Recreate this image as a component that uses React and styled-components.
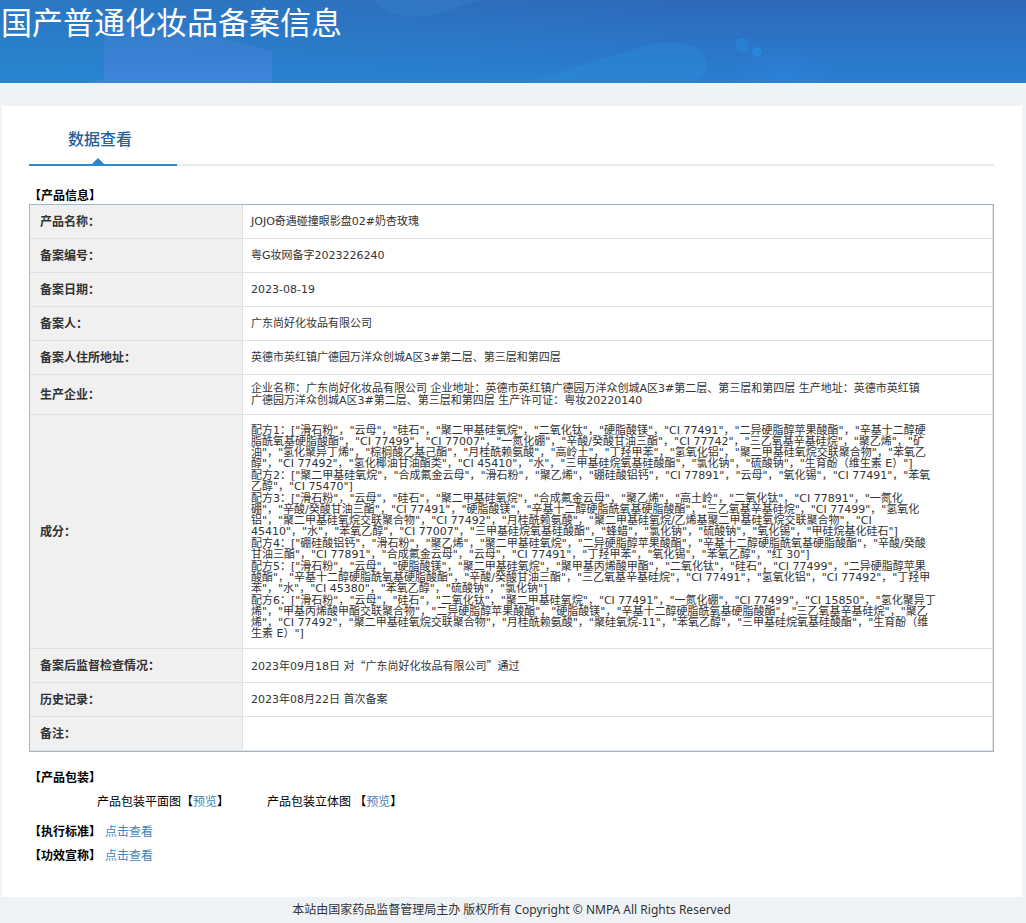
import styled, { createGlobalStyle } from 'styled-components';

const GlobalStyle = createGlobalStyle`
    * {
        box-sizing: border-box;
    }

    body {
        margin: 0;
        background-color: #eff3f6;
        color: #000;
        font-family: "Noto Sans", "Noto Sans CJK SC", sans-serif;
        font-size: 12px;
    }
`;

const Page = styled.div`
    display: flex;
    flex-direction: column;
    min-height: 100vh;
`;

const Banner = styled.header`
    position: relative;
    height: 83px;
    background: linear-gradient(to bottom, #2e68b9, #297fd2);
`;

const BannerArt = styled.svg`
    position: absolute;
    inset: 0;
    width: 100%;
    height: 100%;
`;

const BannerTitle = styled.h1`
    position: relative;
    margin: 0;
    padding-left: 1px;
    color: #fff;
    font-family: "Noto Sans CJK SC", sans-serif;
    font-size: 31px;
    font-weight: 400;
    line-height: 42px;
`;

const Panel = styled.main`
    flex: 1;
    margin: 23px 4px 0 2px;
    padding: 16px 28px 28px 27px;
    background-color: #fff;
`;

const Tabs = styled.nav`
    display: flex;
    margin-bottom: 22px;
    box-shadow: inset 0 -2px 0 #e8e8e8;
`;

const Tab = styled.a`
    position: relative;
    width: 148px;
    padding: 5px 0 13px 39px;
    border-bottom: 2px solid #3089cd;
    color: #22619f;
    font-size: 16px;
    font-weight: 500;
    line-height: 24px;
    text-decoration: none;
`;

const Arrow = styled.svg`
    position: absolute;
    left: 63px;
    bottom: 0;
`;

const SectionTitle = styled.h2`
    margin: 0;
    font-size: 12px;
    font-weight: 700;
    line-height: ${props => (props.$tight ? '16px' : '24px')};
`;

const Table = styled.table`
    width: 100%;
    border: 1px solid #9ab8d2;
    border-collapse: separate;
    border-spacing: 0;
    color: #333;
    table-layout: fixed;
    margin-bottom: 14px;
`;

const Row = styled.tr`
    height: ${props => props.$height || 34}px;

    & > * {
        border-bottom: 1px solid #e0e0e0;
    }
`;

const Label = styled.th`
    width: 213px;
    padding: 0 10px;
    border-right: 1px solid #e0e0e0;
    background-color: #f0f0f0;
    font-size: 12px;
    font-weight: 700;
    line-height: 18px;
    text-align: left;
`;

const Value = styled.td`
    padding: 7px 8px;
    border-right: 1px solid #e0e0e0;
    font-family: "DejaVu Sans", "Noto Sans CJK SC", sans-serif;
    font-size: 11px;
    line-height: ${props => (props.$dense ? '11px' : '12px')};
`;

const Formulas = styled.div`
    display: flex;
    flex-direction: column;
    gap: 1px;
`;

const Formula = styled.p`
    margin: 0;
    white-space: pre-line;
`;

const Quote = styled.span`
    font-family: "Noto Sans CJK SC", sans-serif;
`;

const Packaging = styled.div`
    display: flex;
    gap: 38px;
    padding-left: 68px;
    margin-bottom: 6px;
    line-height: 24px;
`;

const Entry = styled.div`
    display: flex;
    gap: 4px;
`;

const Link = styled.a`
    color: #3f83b8;
    line-height: 24px;
    text-decoration: none;
`;

const Footer = styled.footer`
    color: #333;
    line-height: 26px;
    padding-right: 3px;
    text-align: center;
`;

const producer = `企业名称：广东尚好化妆品有限公司 企业地址：英德市英红镇广德园万洋众创城A区3#第二层、第三层和第四层 生产地址：英德市英红镇
广德园万洋众创城A区3#第二层、第三层和第四层 生产许可证：粤妆20220140`;

const formulas = [
    `配方1：["滑石粉"，"云母"，"硅石"，"聚二甲基硅氧烷"，"二氧化钛"，"硬脂酸镁"，"CI 77491"，"二异硬脂醇苹果酸酯"，"辛基十二醇硬
脂酰氧基硬脂酸酯"，"CI 77499"，"CI 77007"，"一氮化硼"，"辛酸/癸酸甘油三酯"，"CI 77742"，"三乙氧基辛基硅烷"，"聚乙烯"，"矿
油"，"氢化聚异丁烯"，"棕榈酸乙基己酯"，"月桂酰赖氨酸"，"高岭土"，"丁羟甲苯"，"氢氧化铝"，"聚二甲基硅氧烷交联聚合物"，"苯氧乙
醇"，"CI 77492"，"氢化椰油甘油酯类"，"CI 45410"，"水"，"三甲基硅烷氧基硅酸酯"，"氯化钠"，"硫酸钠"，"生育酚（维生素 E）"]`,
    `配方2：["聚二甲基硅氧烷"，"合成氟金云母"，"滑石粉"，"聚乙烯"，"硼硅酸铝钙"，"CI 77891"，"云母"，"氧化锡"，"CI 77491"，"苯氧
乙醇"，"CI 75470"]`,
    `配方3：["滑石粉"，"云母"，"硅石"，"聚二甲基硅氧烷"，"合成氟金云母"，"聚乙烯"，"高土岭"，"二氧化钛"，"CI 77891"，"一氮化
硼"，"辛酸/癸酸甘油三酯"，"CI 77491"，"硬脂酸镁"，"辛基十二醇硬脂酰氧基硬脂酸酯"，"三乙氧基辛基硅烷"，"CI 77499"，"氢氧化
铝"，"聚二甲基硅氧烷交联聚合物"，"CI 77492"，"月桂酰赖氨酸"，"聚二甲基硅氧烷/乙烯基聚二甲基硅氧烷交联聚合物"，"CI
45410"，"水"，"苯氧乙醇"，"CI 77007"，"三甲基硅烷氧基硅酸酯"，"蜂蜡"，"氯化钠"，"硫酸钠"，"氧化锡"，"甲硅烷基化硅石"]`,
    `配方4：["硼硅酸铝钙"，"滑石粉"，"聚乙烯"，"聚二甲基硅氧烷"，"二异硬脂醇苹果酸酯"，"辛基十二醇硬脂酰氧基硬脂酸酯"，"辛酸/癸酸
甘油三酯"，"CI 77891"，"合成氟金云母"，"云母"，"CI 77491"，"丁羟甲苯"，"氧化锡"，"苯氧乙醇"，"红 30"]`,
    `配方5：["滑石粉"，"云母"，"硬脂酸镁"，"聚二甲基硅氧烷"，"聚甲基丙烯酸甲酯"，"二氧化钛"，"硅石"，"CI 77499"，"二异硬脂醇苹果
酸酯"，"辛基十二醇硬脂酰氧基硬脂酸酯"，"辛酸/癸酸甘油三酯"，"三乙氧基辛基硅烷"，"CI 77491"，"氢氧化铝"，"CI 77492"，"丁羟甲
苯"，"水"，"CI 45380"，"苯氧乙醇"，"硫酸钠"，"氯化钠"]`,
    `配方6：["滑石粉"，"云母"，"硅石"，"二氧化钛"，"聚二甲基硅氧烷"，"CI 77491"，"一氮化硼"，"CI 77499"，"CI 15850"，"氢化聚异丁
烯"，"甲基丙烯酸甲酯交联聚合物"，"二异硬脂醇苹果酸酯"，"硬脂酸镁"，"辛基十二醇硬脂酰氧基硬脂酸酯"，"三乙氧基辛基硅烷"，"聚乙
烯"，"CI 77492"，"聚二甲基硅氧烷交联聚合物"，"月桂酰赖氨酸"，"聚硅氧烷-11"，"苯氧乙醇"，"三甲基硅烷氧基硅酸酯"，"生育酚（维
生素 E）"]`,
];

const InfoRow = ({ label, height, dense, children }) => (
    <Row $height={height}>
        <Label scope="row">{label}：</Label>
        <Value $dense={dense}>{children}</Value>
    </Row>
);

const App = () => {
  return (
    <Page>
        <GlobalStyle />
        <Banner>
            <BannerArt viewBox="0 0 1026 83" preserveAspectRatio="none" aria-hidden="true">
                <defs>
                    <linearGradient id="left" x1="0" y1="0" x2="1" y2="0">
                        <stop offset="0" stopColor="#2690cf" stopOpacity="0.4" />
                        <stop offset="1" stopColor="#2690cf" stopOpacity="0" />
                    </linearGradient>
                    <linearGradient id="block" x1="0" y1="0" x2="0" y2="1">
                        <stop offset="0" stopColor="#4b7fd4" stopOpacity="0.2" />
                        <stop offset="1" stopColor="#4084de" stopOpacity="0.85" />
                    </linearGradient>
                    <radialGradient id="glow">
                        <stop offset="0" stopColor="#2f86e4" stopOpacity="0.35" />
                        <stop offset="1" stopColor="#2f86e4" stopOpacity="0" />
                    </radialGradient>
                </defs>
                <rect width="700" height="83" fill="url(#left)" />
                <path d="M104 18 L172 26 L272 51 V83 H90 L104 79 Z" fill="url(#block)" />
                <path d="M375 0 C382 12 400 17 422 16 C445 14 462 4 482 0 Z" fill="#3b86cf" opacity="0.35" />
                <path d="M524 83 L640 47 C672 37 704 43 707 63 C707 71 702 78 692 83 Z" fill="#2c8bd6" opacity="0.4" />
                <ellipse cx="782" cy="80" rx="55" ry="42" fill="url(#glow)" />
                <circle cx="742" cy="45" r="7" fill="#2a86d8" opacity="0.7" />
                <circle cx="757" cy="52" r="5" fill="#2a8ae0" opacity="0.8" />
            </BannerArt>
            <BannerTitle>国产普通化妆品备案信息</BannerTitle>
        </Banner>
        <Panel>
            <Tabs>
                <Tab href="#data">
                    数据查看
                    <Arrow width="12" height="6" viewBox="0 0 12 6" aria-hidden="true">
                        <path d="M6 0 L12 6 H0 Z" fill="#2788cf" />
                    </Arrow>
                </Tab>
            </Tabs>
            <SectionTitle $tight>【产品信息】</SectionTitle>
            <Table id="data">
                <tbody>
                    <InfoRow label="产品名称">JOJO奇遇碰撞眼影盘02#奶杏玫瑰</InfoRow>
                    <InfoRow label="备案编号">粤G妆网备字2023226240</InfoRow>
                    <InfoRow label="备案日期">2023-08-19</InfoRow>
                    <InfoRow label="备案人">广东尚好化妆品有限公司</InfoRow>
                    <InfoRow label="备案人住所地址">英德市英红镇广德园万洋众创城A区3#第二层、第三层和第四层</InfoRow>
                    <InfoRow label="生产企业" height={40}>
                        <Formula>{producer}</Formula>
                    </InfoRow>
                    <InfoRow label="成分" height={234} dense>
                        <Formulas>
                            {formulas.map(text => <Formula key={text.slice(0, 3)}>{text}</Formula>)}
                        </Formulas>
                    </InfoRow>
                    <InfoRow label="备案后监督检查情况">
                        2023年09月18日 对<Quote>“</Quote>广东尚好化妆品有限公司<Quote>”</Quote>通过
                    </InfoRow>
                    <InfoRow label="历史记录">2023年08月22日 首次备案</InfoRow>
                    <InfoRow label="备注" />
                </tbody>
            </Table>
            <SectionTitle>【产品包装】</SectionTitle>
            <Packaging>
                <span>产品包装平面图【<Link href="#flat">预览</Link>】</span>
                <span>产品包装立体图 【<Link href="#solid">预览</Link>】</span>
            </Packaging>
            <Entry>
                <SectionTitle>【执行标准】</SectionTitle>
                <Link href="#standard">点击查看</Link>
            </Entry>
            <Entry>
                <SectionTitle>【功效宣称】</SectionTitle>
                <Link href="#effect">点击查看</Link>
            </Entry>
        </Panel>
        <Footer>本站由国家药品监督管理局主办 版权所有 Copyright © NMPA All Rights Reserved</Footer>
    </Page>
  );
};

export default App;
